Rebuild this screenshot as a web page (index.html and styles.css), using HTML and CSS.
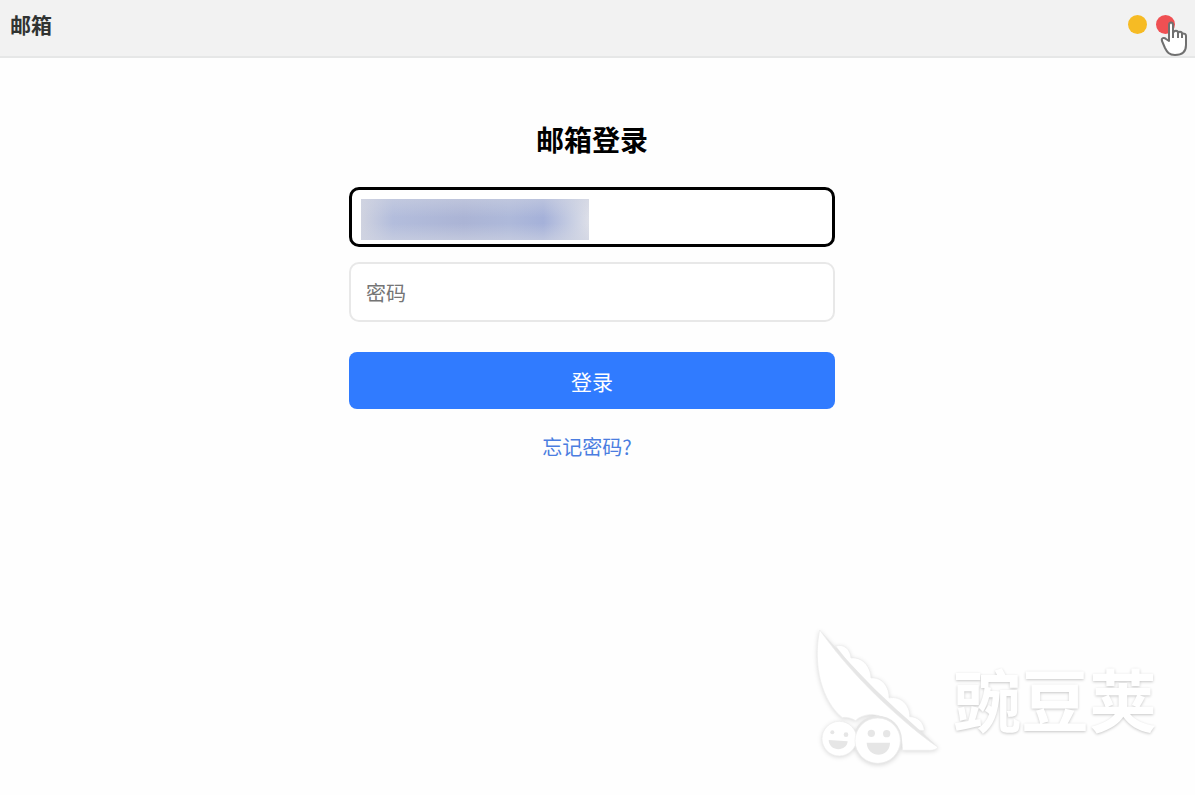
FILE: index.html
```html
<!DOCTYPE html>
<html lang="zh-CN">
  <head>
    <meta charset="UTF-8" />
    <meta name="viewport" content="width=device-width, initial-scale=1.0" />
    <title>邮箱</title>
    <link rel="stylesheet" href="styles.css">
  </head>
  <body>
    <header class="titlebar">
      <span class="titlebar-name">邮箱</span>
      <div class="window-controls">
        <button class="window-btn minimize" type="button" aria-label="最小化"></button>
        <button class="window-btn close" type="button" aria-label="关闭"></button>
      </div>
      <!-- Hand pointer -->
      <svg class="pointer" viewBox="0 0 28 36" aria-hidden="true">
        <path d="M9 20 V4 C9 0.500 13 0.500 13 4 V12 C14 9 18 9 18 12 V13 C18 10 22 10 22 13 V14 C22 12 26 12 26 15 V24 C26 31 22 34 15 34 C9 34 7 31 5 27 L2 20 C1 17 4 16 6 18 Z" />
        <path d="M13 11 V17 M18 12 V17 M22 13 V17" />
      </svg>
    </header>

    <main class="content">
      <form class="login-form">
        <h1>邮箱登录</h1>
        <div class="field">
          <input class="text-input focused" type="email" aria-label="邮箱">
          <span class="field-mask"></span>
        </div>
        <div class="field">
          <input class="text-input" type="password" placeholder="密码" aria-label="密码">
        </div>
        <button class="login-btn" type="submit">登录</button>
        <a class="forgot-link" href="#">忘记密码?</a>
      </form>
    </main>

    <div class="watermark">
      <svg class="watermark-logo" viewBox="0 0 450 465" aria-hidden="true">
        <!-- Peas behind the pod -->
        <path class="shape" d="M98 78 C122 70 142 88 144 114 C178 110 203 140 204 174 C238 170 260 204 258 234 C294 226 322 258 320 290 C344 290 362 306 364 332 L340 330 L240 240 L130 120 Z" />
        <path class="seam" d="M50 30 C105 90 175 170 240 230 C292 280 350 328 405 382 C350 350 300 312 258 272 C190 207 115 120 50 30 Z" />
        <path class="shape" d="M50 30 C110 114 180 190 240 246 C300 302 355 348 405 382 C400 388 392 391 380 391 H298 C302 332 258 286 207 284 C185 284 168 291 158 302 C148 296 132 290 118 293 C58 244 28 140 50 30 Z" />
        <!-- Two faces -->
        <circle class="ring" cx="224" cy="360" r="73" />
        <circle class="shape" cx="109" cy="356" r="52" />
        <circle class="shape" cx="224" cy="362" r="68" />
        <g class="face">
          <circle cx="88" cy="337" r="6" />
          <circle cx="129" cy="344" r="7" />
          <path d="M77 360 L134 364 C132 396 78 396 77 360 Z" />
          <circle cx="205" cy="340" r="11" />
          <circle cx="251" cy="341" r="11" />
          <path d="M191 368 H261 C260 416 193 416 191 368 Z" />
        </g>
      </svg>
      <span class="watermark-text">豌豆荚</span>
    </div>
  </body>
</html>
```
FILE: styles.css
```css
* {
  box-sizing: border-box;
}

html, body {
  margin: 0;
  padding: 0;
}

body {
  position: relative;
  min-height: 100vh;
  background: #fefefe;
  color: #000;
  font-family: "Noto Sans CJK SC", sans-serif;
}

button, input {
  font-family: inherit;
}

/* Title bar */
.titlebar {
  position: relative;
  display: flex;
  justify-content: space-between;
  align-items: center;
  height: 58px;
  padding: 0 20px 8px 10px;
  background: #f2f2f2;
  border-bottom: 2px solid #e6e7e7;
}

.titlebar-name {
  font-size: 21px;
  font-weight: 700;
  color: #303332;
}

.window-controls {
  display: flex;
  gap: 9px;
}

.window-btn {
  width: 19px;
  height: 19px;
  padding: 0;
  border: none;
  border-radius: 50%;
  cursor: pointer;
}

.minimize {
  background: #f6bb24;
}

.close {
  background: #ef5053;
}

.pointer {
  position: absolute;
  top: 21px;
  right: 7px;
  width: 28px;
  height: 36px;
  fill: #fff;
  stroke: #707070;
  stroke-width: 2;
  stroke-linejoin: round;
  pointer-events: none;
}

/* Login form */
.content {
  display: flex;
  justify-content: center;
  padding: 60px 11px 0 0;
}

.login-form {
  display: flex;
  flex-direction: column;
  width: 100%;
  max-width: 486px;
}

h1 {
  margin: 0 0 27px;
  font-size: 28px;
  line-height: 42px;
  font-weight: 700;
  text-align: center;
}

.field {
  position: relative;
  margin-bottom: 15px;
}

.text-input {
  display: block;
  width: 100%;
  height: 60px;
  padding: 0 15px;
  border: 2px solid #e8e8e8;
  border-radius: 10px;
  background: #fff;
  font-size: 20px;
  outline: none;
}

.text-input::placeholder {
  color: #757575;
  opacity: 1;
}

.text-input.focused {
  border: 3px solid #000;
}

/* Hides the typed address */
.field-mask {
  position: absolute;
  top: 12px;
  left: 12px;
  width: 228px;
  height: 41px;
  background:
    linear-gradient(to bottom, rgba(208, 212, 226, 0.5), transparent 45%, transparent 60%, rgba(208, 212, 226, 0.6)),
    linear-gradient(to right, #d0d3e0, #b3bddc 14%, #abb4d5 45%, #aeb9da 65%, #a5b1d9 80%, #ccd2e4 94%, #dddfe8);
}

.login-btn {
  height: 57px;
  margin-top: 15px;
  border: none;
  border-radius: 8px;
  background: #307bff;
  color: #fff;
  font-size: 21px;
  cursor: pointer;
}

.forgot-link {
  align-self: center;
  margin-top: 23px;
  padding-right: 10px;
  color: #4b7de0;
  font-size: 20px;
  line-height: 30px;
  text-decoration: none;
}

/* Watermark */
.watermark {
  position: absolute;
  right: 38px;
  bottom: 20px;
  display: flex;
  align-items: center;
  pointer-events: none;
}

.watermark-logo {
  width: 150px;
  height: 155px;
  filter: drop-shadow(0 1px 2px rgba(0, 0, 0, 0.14));
}

.watermark-logo .shape {
  fill: #fff;
  stroke: #ececec;
  stroke-width: 2;
}

.watermark-logo .seam,
.watermark-logo .ring,
.watermark-logo .face {
  fill: #e6e6e6;
}

.watermark-text {
  color: #fff;
  font-size: 68px;
  line-height: 90px;
  font-weight: 700;
  text-shadow: 0 1px 3px rgba(0, 0, 0, 0.22);
}
```
